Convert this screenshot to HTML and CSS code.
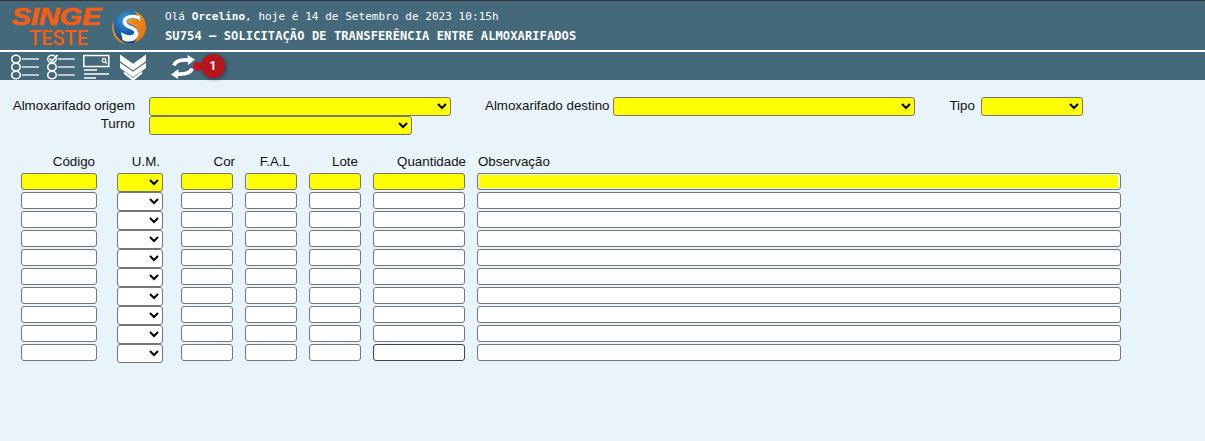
FILE: index.html
```html
<!DOCTYPE html>
<html lang="pt">
<head>
<meta charset="utf-8">
<title>SU754</title>
<link rel="stylesheet" href="styles.css">
</head>
<body>
<header class="top">
  <div class="logo">
    <span class="logo-main">SINGE</span>
    <span class="logo-sub">TESTE</span>
  </div>
  <svg class="ball" width="40" height="40" viewBox="0 0 40 40">
    <defs>
      <radialGradient id="bl" cx="35%" cy="25%" r="80%"><stop offset="0" stop-color="#3c97dc"/><stop offset="0.55" stop-color="#1260ae"/><stop offset="1" stop-color="#0b3a72"/></radialGradient>
      <linearGradient id="or" x1="0" y1="0" x2="1" y2="1"><stop offset="0" stop-color="#f9a51a"/><stop offset="1" stop-color="#e8690c"/></linearGradient>
    </defs>
    <path d="M3 14C0 24 5 35 15 37C9 33 4 25 3 14Z" fill="#e88a1a"/>
    <path d="M30 6C38 13 38 27 30 34C34 28 35 13 30 6Z" fill="#2a6ea8"/>
    <circle cx="20" cy="20" r="16" fill="url(#bl)"/>
    <path d="M23 4.3C31 5.5 36 12 36 20C36 28 31 34 24 35.5C27 32 29.5 28 28.5 24C27 20 22 18 18 16C16 14 18 12 22 12C24 12 27 13 29 14C29 10 26.5 6 23 4.3Z" fill="url(#or)"/>
    <path d="M30 9.5C24 6.5 15 7.5 13 13C11.5 18 16 20.5 21 22.5C24.5 24 25 26 23 27.5C20 29 15 28 11 25L12.5 33C17 35.5 24 35 27 31C30.5 26.5 28 21.5 23 19.5C19.5 18 16.5 17 16.5 14.5C16.5 11.5 21 10.5 25 11.5C27 12 29 13 30 14Z" fill="#f4f6f8"/>
    <path d="M18.5 12.5C21.5 10.8 26 11.5 28.5 14V17.5C25 15.5 21 15.5 18.5 16Z" fill="url(#or)"/>
  </svg>
  <div class="heading">
    <p class="greeting">Olá <b>Orcelino</b>, hoje é 14 de Setembro de 2023 10:15h</p>
    <h1 class="title">SU754 – SOLICITAÇÃO DE TRANSFERÊNCIA ENTRE ALMOXARIFADOS</h1>
  </div>
</header>
<nav class="toolbar">
  <svg class="ico" width="29" height="26" viewBox="0 0 29 26" fill="none" stroke="#fff">
    <ellipse cx="5" cy="5" rx="4.3" ry="3.7" stroke-width="1.6"/><ellipse cx="5" cy="13" rx="4.3" ry="3.7" stroke-width="1.6"/><ellipse cx="5" cy="21" rx="4.3" ry="3.7" stroke-width="1.6"/>
    <path d="M11 5H28M11 13H28M11 21H28" stroke-width="1.4" stroke-opacity=".85"/>
  </svg>
  <svg class="ico" width="29" height="26" viewBox="0 0 29 26" fill="none" stroke="#fff">
    <ellipse cx="5" cy="5" rx="4.3" ry="3.7" stroke-width="1.4"/><ellipse cx="5" cy="13" rx="4.3" ry="3.7" stroke-width="1.6"/><ellipse cx="5" cy="21" rx="4.3" ry="3.7" stroke-width="1.6"/>
    <path d="M2.5 4.5L5 7L10.5 1" stroke-width="1.7"/>
    <path d="M11 5H28M11 13H28M11 21H28" stroke-width="1.4" stroke-opacity=".85"/>
  </svg>
  <svg class="ico" width="27" height="26" viewBox="0 0 27 26" fill="none" stroke="#fff">
    <rect x="0.8" y="1.5" width="25" height="11" stroke-width="1.5"/>
    <circle cx="21" cy="6.5" r="1.8" stroke-width="1.2"/><path d="M22.3 8L24 9.6" stroke-width="1.2"/>
    <path d="M1 16H14M1 20H26M1 24H13" stroke-width="1.7"/>
  </svg>
  <svg class="ico chev" width="26" height="28" viewBox="0 0 27 28" fill="#fff">
    <path d="M0 0L13.5 9.5L27 0V7L13.5 16.500L0 7Z"/>
    <path d="M0 8.500L13.500 18L27 8.500V14L13.500 23.500L0 14Z"/>
    <path d="M4 17.500L13.500 24.500L23 17.500V20L13.500 27.500L4 20Z"/>
  </svg>
  <div class="sync">
    <svg width="24" height="24" viewBox="0 0 24 24" fill="none" stroke="#fff" stroke-width="3.8">
      <path d="M3 10.500C4 6.500 9 4.500 18 5"/><path d="M16.500 0L24 4.500L17 10Z" fill="#fff" stroke="none"/>
      <path d="M21 13.500C20 17.500 15 19.500 6 19"/><path d="M7.500 14L0 19.500L7 24Z" fill="#fff" stroke="none"/>
    </svg>
    <span class="pin"></span>
    <span class="badge">1</span>
  </div>
</nav>
<main class="content">
  <section class="filters">
    <div class="filter-row">
      <label class="lbl lbl-first">Almoxarifado origem</label>
      <select class="req sel-origem"></select>
      <label class="lbl lbl-dest">Almoxarifado destino</label>
      <select class="req sel-destino"></select>
      <label class="lbl lbl-tipo">Tipo</label>
      <select class="req sel-tipo"></select>
    </div>
    <div class="filter-row">
      <label class="lbl lbl-first lbl-second">Turno</label>
      <select class="req sel-turno"></select>
    </div>
  </section>
  <section class="items">
    <div class="h h1">Código</div><div class="h h2">U.M.</div><div class="h h3">Cor</div><div class="h h4">F.A.L</div><div class="h h5">Lote</div><div class="h h6">Quantidade</div><div class="h h7">Observação</div>

    <input class="req"><select class="req"></select><input class="req"><input class="req inset-l"><input class="req"><input class="req"><input class="req inset-r">

    <input><select></select><input><input><input><input><input>
    <input><select></select><input><input><input><input><input>
    <input><select></select><input><input><input><input><input>
    <input><select></select><input><input><input><input><input>
    <input><select></select><input><input><input><input><input>
    <input><select></select><input><input><input><input><input>
    <input><select></select><input><input><input><input><input>
    <input><select></select><input><input><input><input><input>
    <input><select></select><input><input><input><input class="hover"><input>
  </section>
</main>
</body>
</html>
```
FILE: styles.css
```css
* { box-sizing: border-box; }
html, body { margin: 0; height: 100%; }
body {
  background: #e8f4fa;
  font-family: "Liberation Sans", Arial, sans-serif;
  font-size: 13.33px;
  color: #111;
  overflow: hidden;
}
.top {
  height: 52px;
  background: #43697b;
  border-top: 1px solid #333;
  border-bottom: 2px solid #fff;
  display: flex;
  align-items: flex-start;
  color: #fff;
}
.logo {
  width: 90px;
  margin-left: 11px;
  display: flex;
  flex-direction: column;
  align-items: center;
  color: #f95d0f;
}
.logo-main {
  font-size: 24px;
  line-height: 18px;
  margin-top: 7px;
  font-weight: 700;
  font-style: italic;
  -webkit-text-stroke: 0.6px #f95d0f;
  transform: scaleX(1.2);
}
.logo-sub {
  font-size: 20px;
  line-height: 18px;
  margin-top: 3px;
  margin-left: 5px;
  font-family: Roboto, sans-serif;
  font-weight: 500;
}
.ball { margin: 6px 0 0 9px; }
.heading {
  margin-left: 15px;
  font-family: "DejaVu Sans Mono", monospace;
}
.greeting {
  margin: 8px 0 0;
  font-size: 11px;
  line-height: 15px;
  letter-spacing: 0.05px;
}
.title {
  margin: 4px 0 0;
  font-size: 12px;
  line-height: 16px;
  font-weight: 700;
  letter-spacing: 0.12px;
}
.toolbar {
  height: 28px;
  background: #43697b;
  display: flex;
  align-items: flex-start;
  padding: 2px 0 0 11px;
}
.ico { margin-right: 7px; }
.chev { margin: 0 0 0 3px; }
.sync { margin: 1px 0 0 25px; position: relative; }
.sync svg { display: block; }
.pin {
  position: absolute;
  left: 22px;
  top: 7px;
  width: 9px;
  height: 9px;
  border-radius: 50%;
  background: #c4161c;
}
.pin::after {
  content: "";
  position: absolute;
  left: 6px;
  top: 2px;
  width: 10px;
  height: 4px;
  background: #c4161c;
}
.badge {
  position: absolute;
  left: 30px;
  top: -1px;
  width: 24px;
  height: 24px;
  border-radius: 50%;
  background: #b5161c;
  color: #fff;
  font-family: Roboto, sans-serif;
  font-size: 12px;
  font-weight: 700;
  line-height: 24px;
  text-align: center;
  box-shadow: 1px 1px 4px rgba(0,0,0,.45);
}
.content { padding: 17px 0 0 0; }
select, input {
  margin: 0;
  font: inherit;
  border: 1px solid #767676;
  border-radius: 3px;
  background-color: #fff;
  color: #000;
  outline: 0;
}
select { height: 19px; padding: 0; }
input { height: 17px; padding: 1px 2px; }
.req { background-color: #ff0; }
.inset-l { background-clip: content-box; padding: 0 0 0 1px; }
.inset-r { background-clip: content-box; padding: 1px 2px 1px 1px; }
.hover { border-color: #444; }
.filter-row { display: flex; align-items: center; height: 19px; }
.lbl { white-space: nowrap; margin-bottom: 2px; }
.lbl-first { width: 135px; text-align: right; margin-right: 14px; }
.lbl-second { margin-bottom: 4px; }
.lbl-dest { margin-left: 34px; margin-right: 4px; }
.lbl-tipo { margin-left: 34px; margin-right: 6px; }
.sel-origem, .sel-destino { width: 302px; }
.sel-tipo { width: 102px; }
.sel-turno { width: 263px; }
.items {
  display: grid;
  grid-template-columns: 76px 54px 58px 52px 52px 92px 644px;
  grid-template-rows: 18px repeat(10, 19px);
  column-gap: 12px;
  margin: 20px 0 0 21px;
  align-items: start;
}
.items > select { width: 46px; margin-left: 8px; }
.items > select + input { width: 52px; margin-left: 6px; }
.h { line-height: 17px; white-space: nowrap; text-align: right; margin-top: -2px; }
.h1 { padding-right: 2px; }
.h2 { margin-left: 8px; padding-right: 3px; }
.h3 { margin-left: 6px; margin-right: -2px; }
.h4 { padding-right: 7px; }
.h5 { padding-right: 3px; }
.h6 { margin-right: -1px; }
.h7 { text-align: left; padding-left: 1px; }
```
